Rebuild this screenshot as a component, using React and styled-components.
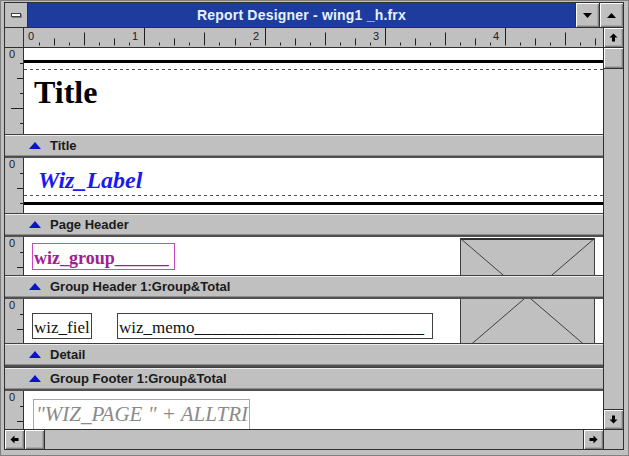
import React from "react";
import styled, { createGlobalStyle, css } from "styled-components";

const Global = createGlobalStyle`
  html, body { margin: 0; padding: 0; background: #c0c0c0; }
  body { width: 629px; height: 456px; overflow: hidden; font-family: "Liberation Sans", Arial, sans-serif; }
`;

const Window = styled.div`
  box-sizing: border-box;
  width: 629px;
  height: 456px;
  background: #c0c0c0;
  border: 1px solid #808080;
  padding: 1px 4px 5px 3px;
  display: flex;
`;

const Inner = styled.div`
  flex: 1;
  min-width: 0;
  border: 1px solid #303030;
  display: flex;
  flex-direction: column;
`;

const TitleBar = styled.div`
  height: 24px;
  flex: none;
  display: flex;
  border-bottom: 1px solid #303030;
`;

const SysBox = styled.div`
  width: 22px;
  border-right: 1px solid #303030;
  display: flex;
  align-items: center;
  justify-content: center;
  background: #c0c0c0;
`;

const SysIcon = styled.div`
  width: 8px;
  height: 2px;
  background: #fff;
  border: 1px solid #404040;
  box-shadow: 1px 1px 0 #808080;
`;

const Caption = styled.div`
  flex: 1;
  background: #1e3c9e;
  color: #e6f2ff;
  font: bold 14px "Liberation Sans", Arial, sans-serif;
  display: flex;
  align-items: center;
  justify-content: center;
  letter-spacing: 0.2px;
`;

const raised = css`
  background: #c0c0c0;
  box-shadow: inset 1px 1px 0 #ffffff, inset -1px -1px 0 #808080, inset -2px -2px 0 #a8a8a8;
  display: flex;
  align-items: center;
  justify-content: center;
`;

const CapButton = styled.div`
  ${raised};
  width: ${p => p.$w}px;
  border-left: 1px solid #303030;
`;

const Middle = styled.div`
  height: 401px;
  flex: none;
  display: flex;
`;

const LeftCol = styled.div`
  flex: 1;
  min-width: 0;
  display: flex;
  flex-direction: column;
`;

const RulerRow = styled.div`
  height: 19px;
  flex: none;
  display: flex;
  border-bottom: 1px solid #303030;
`;

const Corner = styled.div`
  width: 18px;
  border-right: 1px solid #303030;
  background: #c0c0c0;
`;

const TopRuler = styled.div`
  flex: 1;
  background: #c0c0c0;
  overflow: hidden;
`;

const Body = styled.div`
  height: 381px;
  overflow: hidden;
  display: flex;
  flex-direction: column;
  background: #fff;
`;

const Row = styled.div`
  display: flex;
  flex: none;
  height: ${p => p.$h}px;
`;

const SideRuler = styled.div`
  width: 18px;
  flex: none;
  border-right: 1px solid #303030;
  background: #c0c0c0;
  overflow: hidden;
`;

const Canvas = styled.div`
  flex: 1;
  min-width: 0;
  position: relative;
  background: #fff;
`;

const Band = styled.div`
  box-sizing: border-box;
  height: 24px;
  flex: none;
  position: relative;
  z-index: 2;
  background: #c0c0c0;
  border-top: 1px solid #404040;
  border-bottom: 2px solid #505050;
  box-shadow: inset 0 1px 0 #ececec, inset 0 -1px 0 #8c8c8c;
  display: flex;
  align-items: center;
  padding-left: 24px;
  gap: 9px;
  font: bold 13px "Liberation Sans", Arial, sans-serif;
  color: #1a1a1a;
  white-space: nowrap;
`;

const VScroll = styled.div`
  width: 19px;
  flex: none;
  border-left: 1px solid #303030;
  display: flex;
  flex-direction: column;
  background: #c0c0c0;
`;

const VButton = styled.div`
  ${raised};
  height: ${p => p.$h}px;
  flex: none;
  border-top: ${p => (p.$top ? "1px solid #303030" : "none")};
  border-bottom: ${p => (p.$bottom ? "1px solid #303030" : "none")};
`;

const Trough = styled.div`
  flex: 1;
  background: #c0c0c0;
`;

const Bottom = styled.div`
  height: 19px;
  flex: none;
  display: flex;
  border-top: 1px solid #303030;
`;

const HButton = styled.div`
  ${raised};
  width: ${p => p.$w}px;
  flex: none;
  border-left: ${p => (p.$left ? "1px solid #303030" : "none")};
  border-right: ${p => (p.$right ? "1px solid #303030" : "none")};
`;

const CornerBox = styled.div`
  width: 19px;
  flex: none;
  border-left: 1px solid #303030;
  background: #c0c0c0;
`;

/* report objects on the free canvas */
const ThickLine = styled.div`
  position: absolute;
  left: 0;
  right: 0;
  top: ${p => p.$top}px;
  height: 3px;
  background: #000;
`;

const DashLine = styled.div`
  position: absolute;
  left: 0;
  right: 0;
  top: ${p => p.$top}px;
  height: 1px;
  background: repeating-linear-gradient(90deg, #505050 0 3px, transparent 3px 6px);
`;

const serif = `"Liberation Serif", "Times New Roman", serif`;

const TitleText = styled.div`
  position: absolute;
  left: ${p => p.$x}px;
  top: ${p => p.$y}px;
  font: bold 32px ${serif};
  line-height: 1;
  color: #000;
`;

const LabelText = styled.div`
  position: absolute;
  left: ${p => p.$x}px;
  top: ${p => p.$y}px;
  font: italic bold 24px ${serif};
  line-height: 1;
  color: #1a1af0;
`;

const fieldBox = css`
  position: absolute;
  box-sizing: border-box;
  left: ${p => p.$x}px;
  top: ${p => p.$y}px;
  width: ${p => p.$w}px;
  height: ${p => p.$h}px;
  overflow: hidden;
  white-space: nowrap;
  line-height: 1;
`;

const GroupField = styled.div`
  ${fieldBox};
  border: 1px solid #c848c8;
  padding: 5px 0 0 1px;
  font: bold 18px ${serif};
  line-height: 1;
  color: #a02090;
`;

const PlainField = styled.div`
  ${fieldBox};
  border: 1px solid #404040;
  padding: 5px 0 0 1px;
  font: 17px ${serif};
  line-height: 1;
  color: #101010;
`;

const ExprField = styled.div`
  ${fieldBox};
  border: 1px solid #a8a8a8;
  padding: 4px 0 0 2px;
  font: italic 21px ${serif};
  line-height: 1;
  color: #8a8a8a;
`;

const Picture = styled.div`
  position: absolute;
  left: ${p => p.$x}px;
  top: ${p => p.$y}px;
  z-index: 1;
  line-height: 0;
`;

/* drawings */
const BandTri = () => (
  <svg width="12" height="7" viewBox="0 0 12 7">
    <polygon points="6,0 12,7 0,7" fill="#0a14c8" />
  </svg>
);

const CapTri = ({ down }) => (
  <svg width="9" height="5" viewBox="0 0 9 5">
    <polygon points={down ? "0,0 9,0 4.5,5" : "4.5,0 9,5 0,5"} fill="#000" />
  </svg>
);

const Arrow = ({ rot }) => (
  <svg width="9" height="9" viewBox="0 0 9 9" style={{ transform: `rotate(${rot}deg)` }}>
    <polygon points="4.5,0.5 8.5,4.5 6,4.5 6,8.5 3,8.5 3,4.5 0.5,4.5" fill="#000" />
  </svg>
);

const TopRulerSvg = () => {
  const ticks = [];
  for (let i = 1; i < 39; i++) {
    const x = Math.round((i * 120.3) / 8) + 0.5;
    const h = i % 8 === 0 ? 18 : i % 4 === 0 ? 13 : i % 2 === 0 ? 7 : 3;
    ticks.push(<line key={i} x1={x} x2={x} y1={17.5 - h} y2={17.5} stroke="#202020" />);
  }
  const labels = [0, 1, 2, 3, 4].map(n => (
    <text key={n} x={n === 0 ? 4 : Math.round(n * 120.3) - 12} y={12} fontSize="11" fill="#202020"
      fontFamily='"Liberation Sans", Arial, sans-serif'>{n}</text>
  ));
  return (
    <svg width="579" height="19" viewBox="0 0 579 19">
      {ticks}
      {labels}
    </svg>
  );
};

const SideRulerSvg = ({ h }) => {
  const ticks = [];
  for (let k = 1; k * 15 < h; k++) {
    const y = k * 15 + 0.5;
    const len = k % 4 === 0 ? 12 : k % 2 === 0 ? 6 : 3;
    ticks.push(<line key={k} x1={18 - len} x2={18} y1={y} y2={y} stroke="#202020" />);
  }
  return (
    <svg width="18" height={h} viewBox={`0 0 18 ${h}`}>
      <text x="4" y="10" fontSize="11" fill="#202020" fontFamily='"Liberation Sans", Arial, sans-serif'>0</text>
      {ticks}
    </svg>
  );
};

const PictureSvg = () => (
  <svg width="135" height="116" viewBox="0 0 135 116">
    <rect x="0.5" y="0.5" width="134" height="115" fill="#c0c0c0" stroke="#404040" />
    <line x1="0" y1="1" x2="135" y2="1" stroke="#303030" strokeWidth="2" />
    <line x1="0.5" y1="0.5" x2="134.5" y2="115.5" stroke="#404040" />
    <line x1="134.5" y1="0.5" x2="0.5" y2="115.5" stroke="#404040" />
  </svg>
);

const Section = ({ h, band, children }) => (
  <>
    {h > 0 && (
      <Row $h={h}>
        <SideRuler>
          <SideRulerSvg h={h} />
        </SideRuler>
        <Canvas>{children}</Canvas>
      </Row>
    )}
    {band && (
      <Band>
        <BandTri />
        <span>{band}</span>
      </Band>
    )}
  </>
);

export default function App() {
  return (
    <>
      <Global />
      <Window>
        <Inner>
          <TitleBar>
            <SysBox>
              <SysIcon />
            </SysBox>
            <Caption>Report Designer - wing1 _h.frx</Caption>
            <CapButton $w={23}>
              <CapTri down />
            </CapButton>
            <CapButton $w={23}>
              <CapTri />
            </CapButton>
          </TitleBar>

          <Middle>
            <LeftCol>
              <RulerRow>
                <Corner />
                <TopRuler>
                  <TopRulerSvg />
                </TopRuler>
              </RulerRow>
              <Body>
                <Section h={86} band="Title">
                  <ThickLine $top={12} />
                  <DashLine $top={21} />
                  <TitleText $x={10} $y={28}>Title</TitleText>
                </Section>
                <Section h={55} band="Page Header">
                  <LabelText $x={14} $y={10}>Wiz_Label</LabelText>
                  <DashLine $top={37} />
                  <ThickLine $top={44} />
                </Section>
                <Section h={38} band="Group Header 1:Group&Total">
                  <GroupField $x={8} $y={6} $w={143} $h={27}>wiz_group______</GroupField>
                  <Picture $x={436} $y={1}>
                    <PictureSvg />
                  </Picture>
                </Section>
                <Section h={44} band="Detail">
                  <PlainField $x={8} $y={14} $w={60} $h={26}>wiz_fiel</PlainField>
                  <PlainField $x={93} $y={14} $w={316} $h={26}>
                    wiz_memo{"_".repeat(27)}
                  </PlainField>
                </Section>
                <Section h={0} band="Group Footer 1:Group&Total" />
                <Section h={38}>
                  <ExprField $x={9} $y={8} $w={217} $h={34}>
                    "WIZ_PAGE " + ALLTRI
                  </ExprField>
                </Section>
              </Body>
            </LeftCol>
            <VScroll>
              <VButton $h={19} $bottom>
                <Arrow rot={0} />
              </VButton>
              <VButton $h={20} $bottom />
              <Trough />
              <VButton $h={19} $top>
                <Arrow rot={180} />
              </VButton>
            </VScroll>
          </Middle>

          <Bottom>
            <HButton $w={19} $right>
              <Arrow rot={270} />
            </HButton>
            <HButton $w={19} $right />
            <Trough />
            <HButton $w={19} $left>
              <Arrow rot={90} />
            </HButton>
            <CornerBox />
          </Bottom>
        </Inner>
      </Window>
    </>
  );
}
